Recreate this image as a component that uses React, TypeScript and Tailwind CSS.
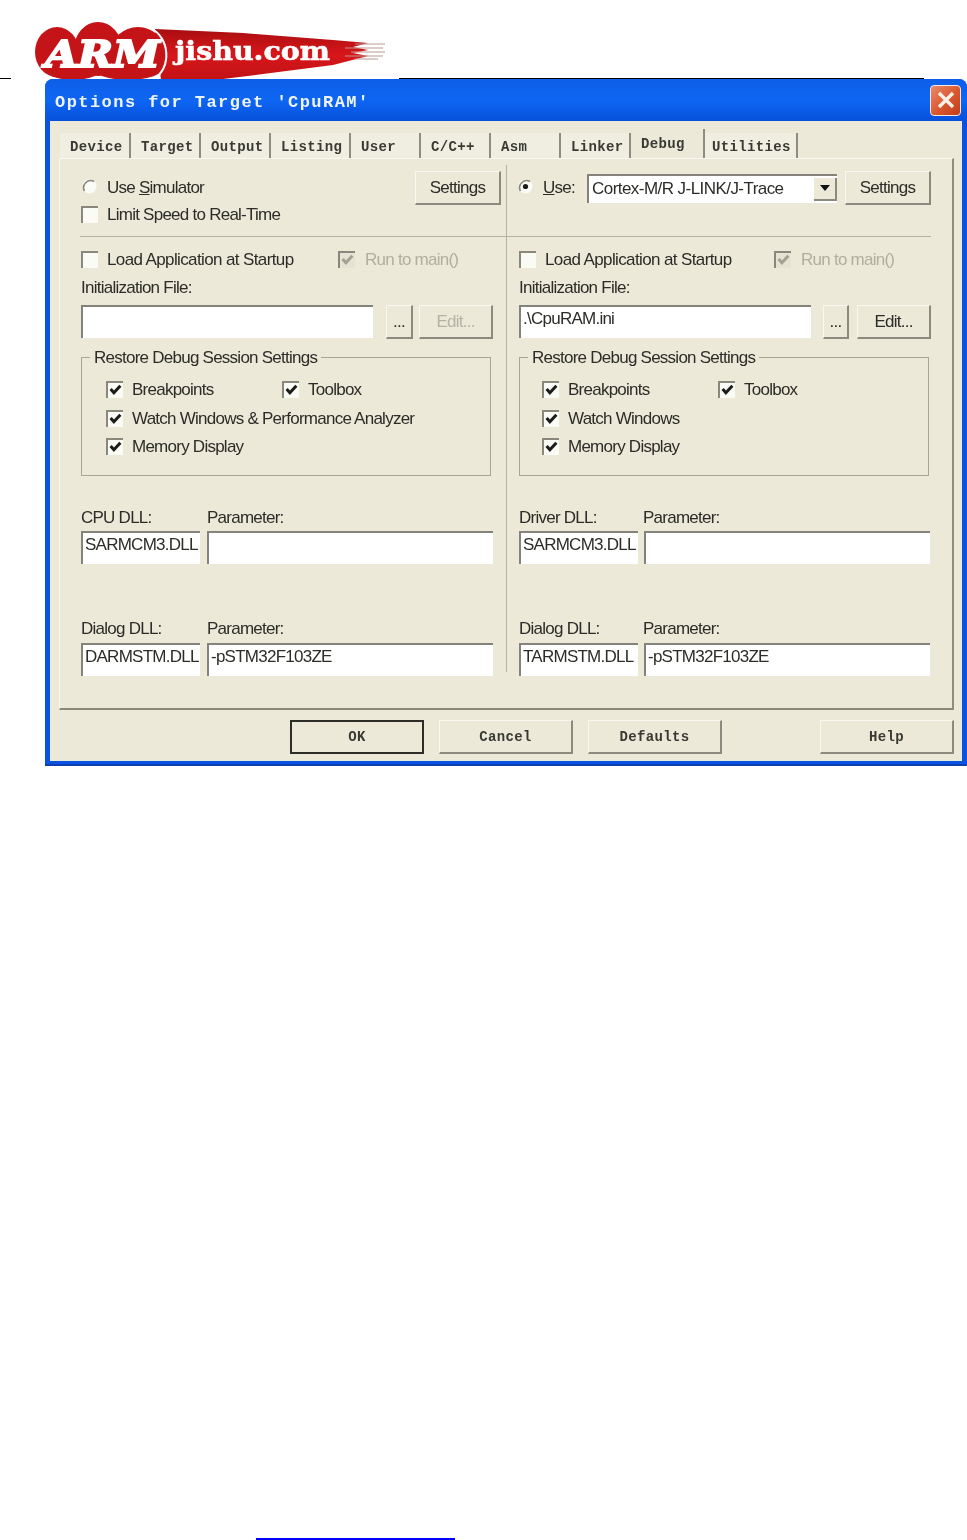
import type { ReactNode } from 'react';

const SANS = "font-['Liberation_Sans',Arial,sans-serif] text-[17px] leading-[20px] tracking-[-0.75px] text-[#2c2c28] whitespace-nowrap";
const MONO = "font-['Liberation_Mono','Courier_New',monospace] font-bold text-[14px] leading-[18px] tracking-[0.35px] text-[#3a3a34] whitespace-nowrap";

const tabs = [
  { name: 'Device', w: 'w-[71px]' },
  { name: 'Target', w: 'w-[70px]' },
  { name: 'Output', w: 'w-[70px]' },
  { name: 'Listing', w: 'w-[80px]' },
  { name: 'User', w: 'w-[70px]' },
  { name: 'C/C++', w: 'w-[70px]' },
  { name: 'Asm', w: 'w-[70px]' },
  { name: 'Linker', w: 'w-[70px]' },
];

const Check = ({ checked = false, disabled = false }: { checked?: boolean; disabled?: boolean }) => (
  <span
    className={`w-[17px] h-[17px] shrink-0 -translate-y-px flex items-center justify-center border-t-2 border-l-2 border-[#8a887c] ${
      disabled ? 'bg-[#e6e3d4]' : 'bg-[#fbfbf6]'
    }`}
  >
    {checked && (
      <svg viewBox="0 0 12 12" className="w-[13px] h-[13px] -translate-y-px">
        <path
          d="M1.5 5.5 L4.5 9 L10.5 2.5"
          fill="none"
          stroke={disabled ? '#a3a192' : '#1c1c1c'}
          strokeWidth="2.8"
        />
      </svg>
    )}
  </span>
);

const Radio = ({ on = false }: { on?: boolean }) => (
  <svg viewBox="0 0 17 17" className="w-[17px] h-[17px] shrink-0 -translate-y-[2px]">
    <circle cx="8.5" cy="8.5" r="7" fill="#fbfbf6" />
    <path d="M3.5 13 A7 7 0 0 1 13 3.5" fill="none" stroke="#8a887c" strokeWidth="1.6" />
    {on && <circle cx="8.5" cy="8.5" r="2.6" fill="#1c1c1c" />}
  </svg>
);

const Btn = ({ label, className, disabled = false }: { label: string; className: string; disabled?: boolean }) => (
  <div
    className={`${SANS} ${className} shrink-0 flex items-center justify-center bg-[#ece9d8] border-t border-l border-[#f8f7f0] border-r-2 border-b-2 border-r-[#8c8a7e] border-b-[#8c8a7e] ${
      disabled ? '!text-[#b4b2a4]' : ''
    }`}
  >
    {label}
  </div>
);

const Field = ({ value = '', className }: { value?: string; className: string }) => (
  <div className={`${SANS} ${className} shrink-0 h-[33px] pl-[2px] pt-[2px] bg-white border-t-2 border-l-2 border-[#84827a]`}>
    {value}
  </div>
);

const Opt = ({ label, className = '' }: { label: string; className?: string }) => (
  <div className={`flex items-center gap-[9px] h-[20px] ${className}`}>
    <Check checked />
    <span className={SANS}>{label}</span>
  </div>
);

type ColumnProps = {
  head: ReactNode;
  headOffset: string;
  second?: string;
  loadGap: string;
  file?: string;
  editDisabled?: boolean;
  browseOffset: string;
  browseW: string;
  editOffset: string;
  groupPad: string;
  watch: string;
  dllOne: string;
  dllOneValue: string;
  dllTwoValue: string;
  paramOffset: string;
  paramLabelW: string;
  paramTwo: string;
  lineW: string;
  lineOffset: string;
};

const Column = (p: ColumnProps) => (
  <div className="w-[446px] shrink-0">
    <div className={`h-[34px] mt-[12px] ${p.headOffset}`}>{p.head}</div>
    <div className="h-[20px] ml-[21px]">
      {p.second && (
        <div className="flex items-center gap-[9px] h-[20px]">
          <Check />
          <span className={SANS}>{p.second}</span>
        </div>
      )}
    </div>
    <div className={`mt-[11px] h-[1px] bg-[#b5b3a6] ${p.lineW} ${p.lineOffset}`} />
    <div className="mt-[13px] flex items-center h-[20px] ml-[21px]">
      <div className={`flex items-center ${p.loadGap}`}>
        <Check />
        <span className={`${SANS} ml-[9px] !tracking-[-0.62px]`}>Load Application at Startup</span>
      </div>
      <div className="flex items-center">
        <Check checked disabled />
        <span className={`${SANS} ml-[10px] !text-[#b0ae9f]`}>Run to main()</span>
      </div>
    </div>
    <div className={`${SANS} mt-[8px] ml-[21px]`}>Initialization File:</div>
    <div className="mt-[7px] flex ml-[21px]">
      <Field value={p.file} className="w-[292px]" />
      <Btn label="..." className={`${p.browseW} ${p.browseOffset} h-[34px]`} />
      <Btn label="Edit..." disabled={p.editDisabled} className={`w-[74px] h-[34px] ${p.editOffset}`} />
    </div>
    <div className={`relative mt-[18px] ml-[21px] w-[410px] h-[119px] border border-[#a7a596] pt-[22px] ${p.groupPad}`}>
      <span className={`${SANS} absolute -top-[10px] left-[8px] px-[4px] bg-[#ece9d8]`}>
        Restore Debug Session Settings
      </span>
      <div className="flex">
        <Opt label="Breakpoints" className="w-[176px]" />
        <Opt label="Toolbox" />
      </div>
      <Opt label={p.watch} className="mt-[9px]" />
      <Opt label="Memory Display" className="mt-[8px]" />
    </div>
    <div className="mt-[32px] ml-[21px] flex h-[20px]">
      <span className={`${SANS} ${p.paramLabelW}`}>{p.dllOne}</span>
      <span className={SANS}>Parameter:</span>
    </div>
    <div className="mt-[3px] ml-[21px] flex">
      <Field value={p.dllOneValue} className="w-[119px]" />
      <Field className={`w-[286px] ${p.paramOffset}`} />
    </div>
    <div className="mt-[55px] ml-[21px] flex h-[20px]">
      <span className={`${SANS} ${p.paramLabelW}`}>Dialog DLL:</span>
      <span className={SANS}>Parameter:</span>
    </div>
    <div className="mt-[4px] ml-[21px] flex">
      <Field value={p.dllTwoValue} className="w-[119px]" />
      <Field value={p.paramTwo} className={`w-[286px] ${p.paramOffset}`} />
    </div>
  </div>
);

const Logo = () => (
  <svg viewBox="0 0 360 62" className="absolute left-[33px] top-[20px] w-[360px] h-[62px] blur-[0.6px]">
    <defs>
      <linearGradient id="stroke-fill" x1="0" y1="0" x2="0" y2="1">
        <stop offset="0" stopColor="#a80e10" />
        <stop offset="0.5" stopColor="#d8161a" />
        <stop offset="1" stopColor="#c01216" />
      </linearGradient>
    </defs>
    <path
      d="M122 9 L210 13 L300 20 L335 23 L320 27 L335 30 L320 33 L335 36 L300 45 L230 54 L190 59 L128 60 Z"
      fill="url(#stroke-fill)"
    />
    <path
      d="M322 24 H352 M312 28 H350 M318 32 H352 M312 36 H350 M322 39 H345"
      stroke="#b89a90"
      strokeWidth="1"
      fill="none"
    />
    <ellipse cx="24" cy="32" rx="22" ry="25" fill="#c41418" />
    <ellipse cx="65" cy="29" rx="24" ry="27" fill="#c41418" />
    <ellipse cx="105" cy="32" rx="27" ry="25" fill="#c41418" />
    <ellipse cx="40" cy="47" rx="30" ry="13" fill="#c41418" />
    <ellipse cx="95" cy="47" rx="36" ry="13" fill="#c41418" />
    <path d="M118 8 C136 18 140 46 120 60" fill="none" stroke="#fff" strokeWidth="2" />
    <text
      x="12"
      y="47"
      fontFamily="'DejaVu Serif', serif"
      fontWeight="bold"
      fontStyle="italic"
      fontSize="38"
      fill="#fff"
      stroke="#fff"
      strokeWidth="2"
      textLength="115"
      lengthAdjust="spacingAndGlyphs"
    >
      ARM
    </text>
    <text
      x="142"
      y="40"
      fontFamily="'DejaVu Serif', serif"
      fontWeight="bold"
      fontSize="26"
      fill="#fff"
      stroke="#fff"
      strokeWidth="0.6"
      textLength="155"
      lengthAdjust="spacingAndGlyphs"
    >
      jishu.com
    </text>
  </svg>
);

export default function App() {
  return (
    <div className="w-[967px] h-[1540px] bg-white flex flex-col overflow-hidden">
      <div className="relative h-[79px] shrink-0">
        <div className="absolute top-[78px] left-0 w-[11px] h-[1px] bg-black" />
        <div className="absolute top-[78px] left-[399px] w-[525px] h-[1px] bg-black" />
        <Logo />
      </div>

      <div className="ml-[45px] w-[922px] h-[687px] shrink-0 rounded-t-[8px] bg-[#0a52e0] border-b-[2px] border-b-[#0f3fb0] flex flex-col blur-[0.6px]">
        <div className="h-[42px] shrink-0 rounded-t-[8px] bg-gradient-to-b from-[#0d5ee8] via-[#0e66f2] to-[#0850dc] flex items-center pl-[10px] pr-[6px]">
          <span className="pt-[5px] font-['Liberation_Mono','Courier_New',monospace] font-bold text-[17px] tracking-[1.45px] text-[#eef4fc] whitespace-pre">
            Options for Target 'CpuRAM'
          </span>
          <div className="ml-auto w-[31px] h-[31px] rounded-[4px] border border-[#f4e8e0] bg-gradient-to-br from-[#e8896a] via-[#dc5a30] to-[#c03c18] flex items-center justify-center">
            <svg viewBox="0 0 20 20" className="w-[20px] h-[20px]">
              <path d="M3 3 L17 17 M17 3 L3 17" stroke="#fdf0e8" strokeWidth="3.4" />
            </svg>
          </div>
        </div>

        <div className="mx-[5px] h-[640px] bg-[#ece9d8] pt-[12px]">
          <div className="flex items-end h-[25px] ml-[10px]">
            {tabs.map((tab) => (
              <div
                key={tab.name}
                className={`${MONO} ${tab.w} h-[25px] bg-[#f0eee1] border-r-2 border-r-[#8f8d80] pl-[10px] pt-[5px]`}
              >
                {tab.name}
              </div>
            ))}
            <div className={`${MONO} w-[74px] h-[29px] bg-[#ece9d8] border-r-2 border-r-[#8f8d80] pl-[10px] pt-[6px]`}>
              Debug
            </div>
            <div className={`${MONO} w-[93px] h-[25px] bg-[#f0eee1] border-r-2 border-r-[#8f8d80] pl-[7px] pt-[5px]`}>
              Utilities
            </div>
          </div>

          <div className="ml-[9px] w-[895px] h-[552px] border-t border-t-[#f8f7f0] border-l border-l-[#f8f7f0] border-r-2 border-r-[#8f8d80] border-b-2 border-b-[#8a887b] flex">
            <Column
              headOffset="ml-[21px]"
              head={
                <div className="flex items-center h-[34px]">
                  <Radio />
                  <span className={`${SANS} ml-[9px] w-[308px]`}>
                    Use <span className="underline">S</span>imulator
                  </span>
                  <Btn label="Settings" className="w-[86px] h-[34px]" />
                </div>
              }
              second="Limit Speed to Real-Time"
              lineW="w-[426px]"
              lineOffset="ml-[20px]"
              loadGap="w-[257px]"
              editDisabled
              browseOffset="ml-[13px]"
              browseW="w-[27px]"
              editOffset="ml-[6px]"
              groupPad="pl-[24px]"
              watch="Watch Windows & Performance Analyzer"
              dllOne="CPU DLL:"
              dllOneValue="SARMCM3.DLL"
              dllTwoValue="DARMSTM.DLL"
              paramLabelW="w-[126px]"
              paramOffset="ml-[7px]"
              paramTwo="-pSTM32F103ZE"
            />
            <div className="w-[1px] h-[507px] mt-[6px] bg-[#b5b3a6] shrink-0" />
            <div className="-ml-[9px]">
              <Column
                headOffset="ml-[19px]"
                head={
                  <div className="flex items-center h-[34px]">
                    <Radio on />
                    <span className={`${SANS} ml-[9px] w-[44px]`}>
                      <span className="underline">U</span>se:
                    </span>
                    <div className={`${SANS} !tracking-[-0.55px] w-[250px] h-[29px] pl-[3px] flex items-center bg-white border-t-2 border-l-2 border-[#84827a]`}>
                      Cortex-M/R J-LINK/J-Trace
                      <div className="ml-auto w-[23px] h-[23px] flex items-center justify-center bg-[#ece9d8] border-r-2 border-b-2 border-[#8c8a7e]">
                        <svg viewBox="0 0 10 6" className="w-[10px] h-[6px]">
                          <path d="M0 0 H10 L5 6 Z" fill="#111" />
                        </svg>
                      </div>
                    </div>
                    <Btn label="Settings" className="ml-[8px] w-[86px] h-[34px]" />
                  </div>
                }
                lineW="w-[424px]"
                lineOffset="ml-[9px]"
                loadGap="w-[255px]"
                file=".\CpuRAM.ini"
                browseOffset="ml-[12px]"
                browseW="w-[26px]"
                editOffset="ml-[8px]"
                groupPad="pl-[22px]"
                watch="Watch Windows"
                dllOne="Driver DLL:"
                dllOneValue="SARMCM3.DLL"
                dllTwoValue="TARMSTM.DLL"
                paramLabelW="w-[124px]"
                paramOffset="ml-[6px]"
                paramTwo="-pSTM32F103ZE"
              />
            </div>
          </div>

          <div className="mt-[10px] flex">
            <div className={`${MONO} ml-[240px] w-[134px] h-[34px] flex items-center justify-center border-2 border-[#2e2e28]`}>OK</div>
            <div className={`${MONO} ml-[15px] w-[134px] h-[34px] flex items-center justify-center border-t border-l border-[#f8f7f0] border-r-2 border-b-2 border-r-[#8c8a7e] border-b-[#8c8a7e]`}>Cancel</div>
            <div className={`${MONO} ml-[15px] w-[134px] h-[34px] flex items-center justify-center border-t border-l border-[#f8f7f0] border-r-2 border-b-2 border-r-[#8c8a7e] border-b-[#8c8a7e]`}>Defaults</div>
            <div className={`${MONO} ml-[98px] w-[134px] h-[34px] flex items-center justify-center border-t border-l border-[#f8f7f0] border-r-2 border-b-2 border-r-[#8c8a7e] border-b-[#8c8a7e]`}>Help</div>
          </div>
        </div>
      </div>

      <div className="mt-auto ml-[256px] w-[199px] h-[2px] bg-[#0000ff]" />
    </div>
  );
}
